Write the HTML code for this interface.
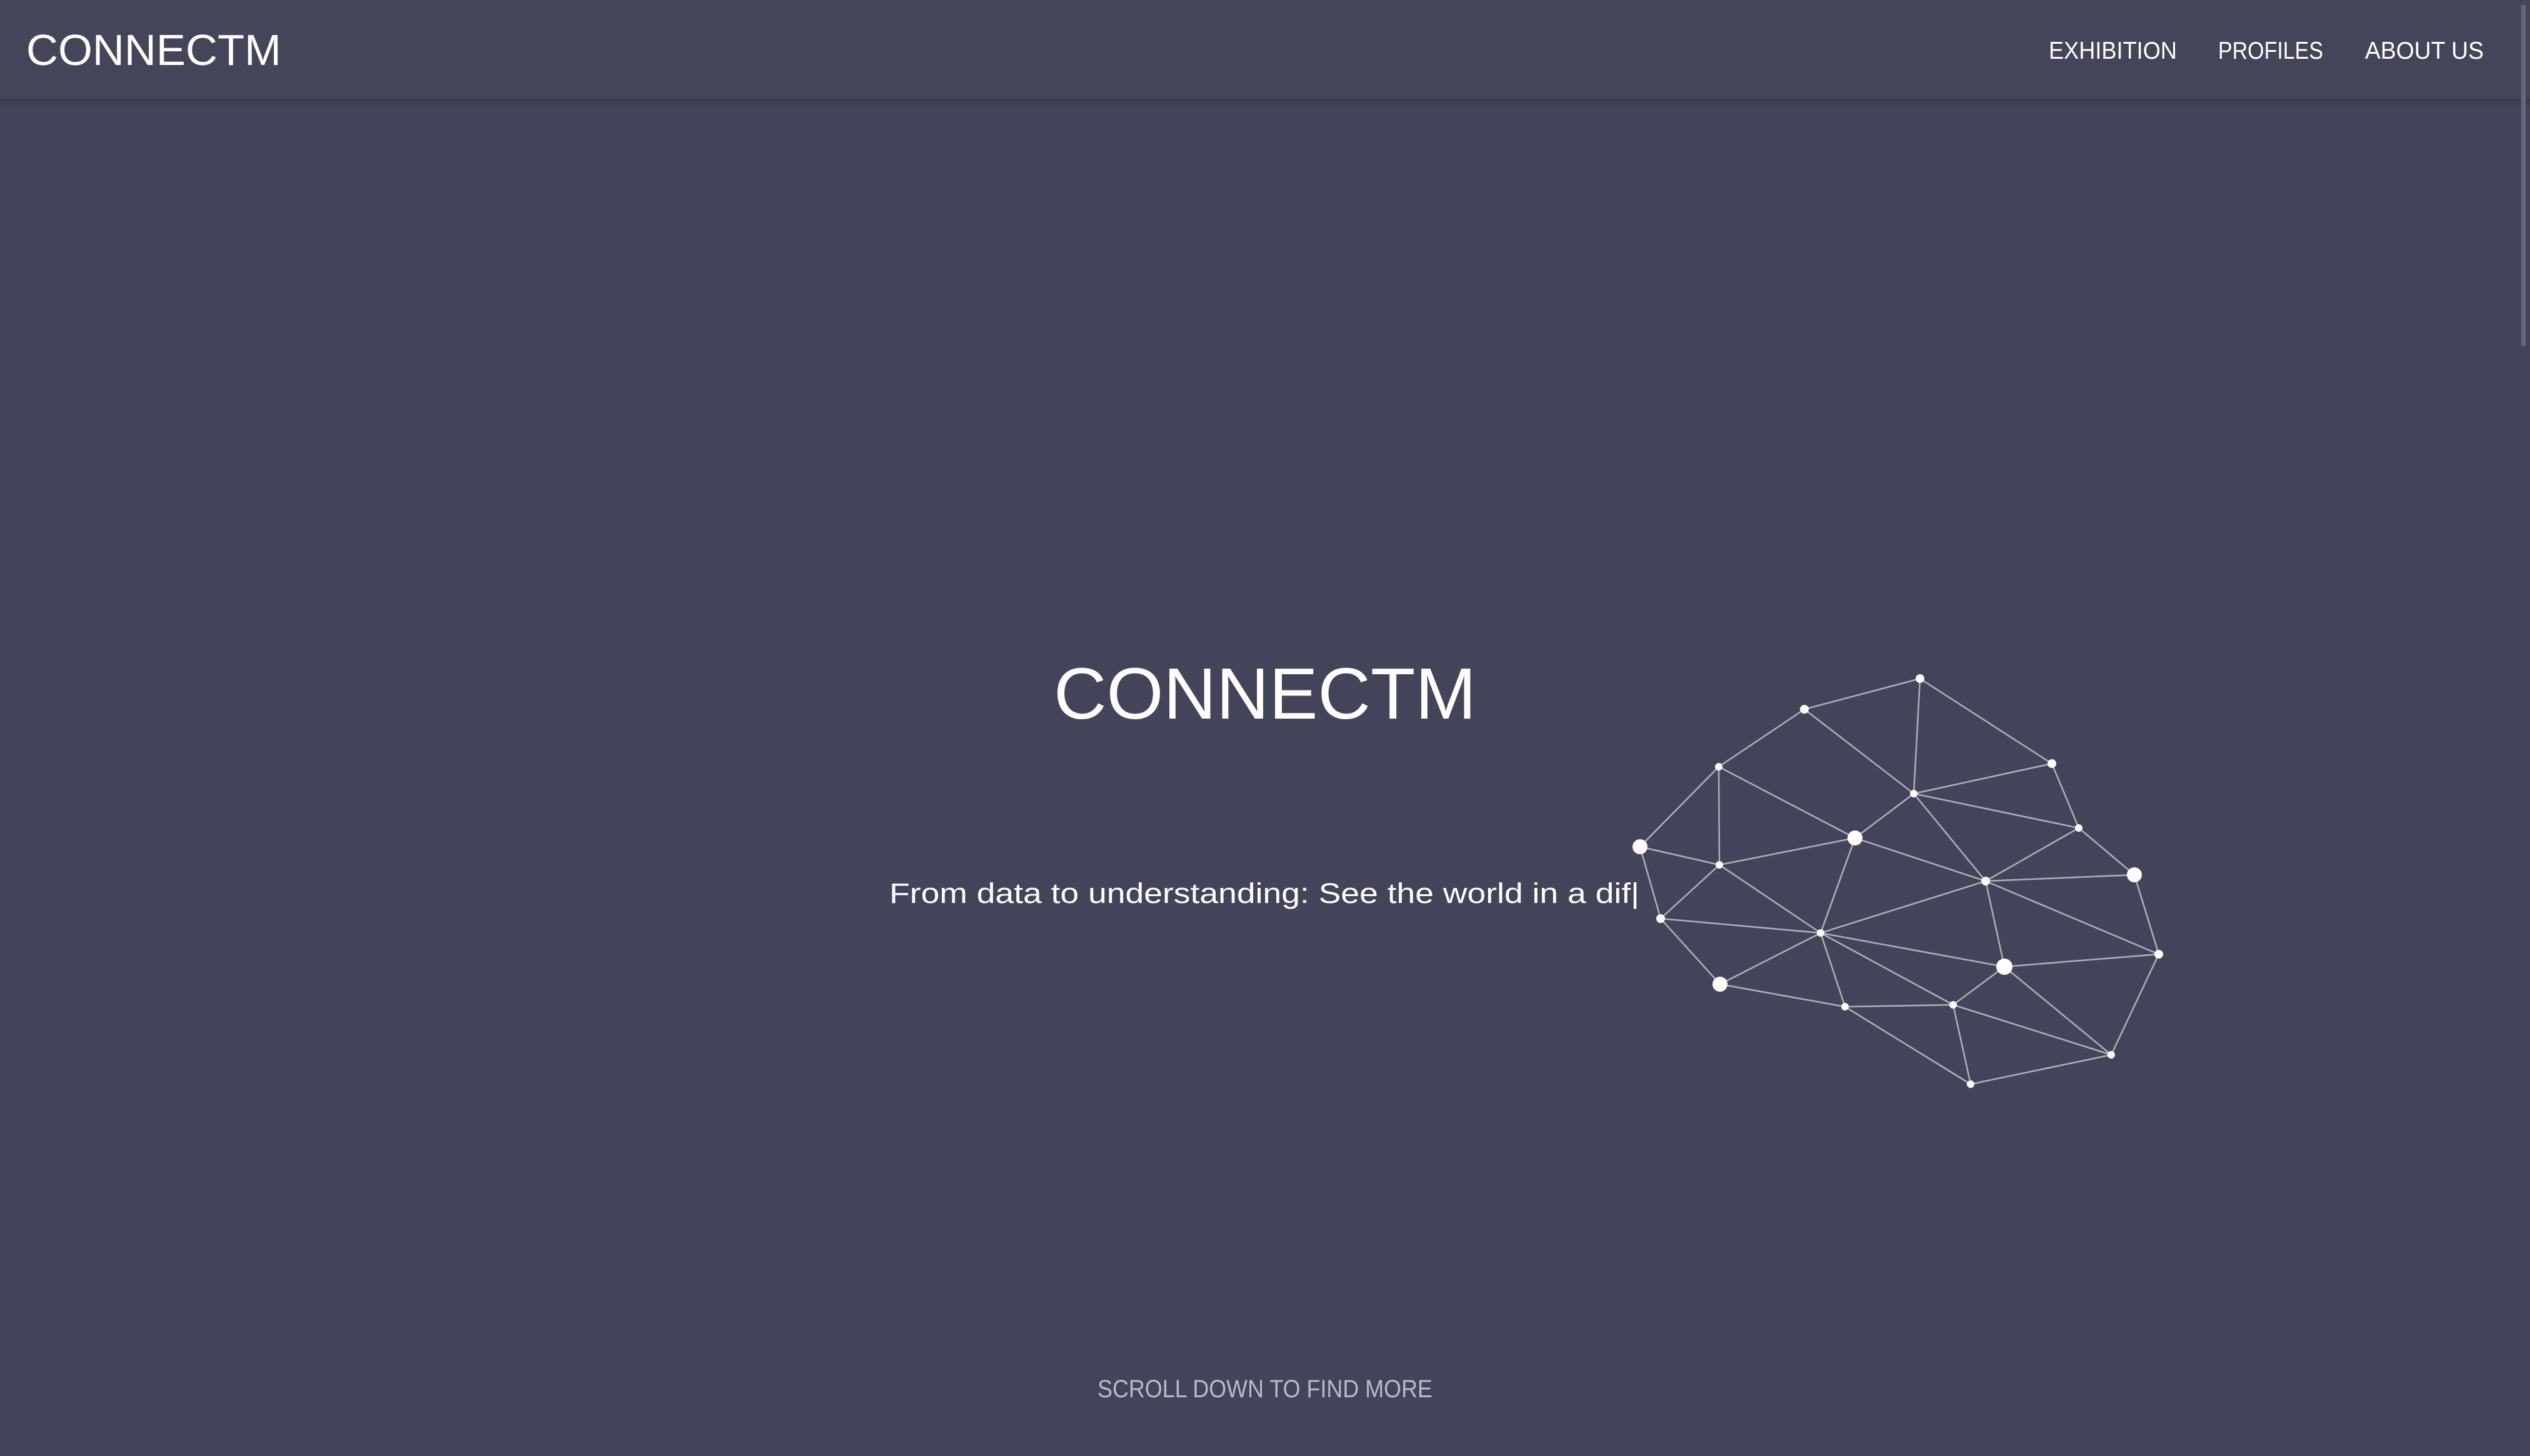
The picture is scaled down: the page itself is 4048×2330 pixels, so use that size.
<!DOCTYPE html>
<html><head><meta charset="utf-8">
<style>
html,body{margin:0;padding:0;background:#434459;width:4048px;height:2330px;overflow:hidden}
svg{display:block}
text{font-family:"Liberation Sans",sans-serif}
</style></head>
<body>
<svg width="4048" height="2330" viewBox="0 0 4048 2330" xmlns="http://www.w3.org/2000/svg">
<defs>
<linearGradient id="sh" x1="0" y1="0" x2="0" y2="1">
<stop offset="0" stop-color="#2e2f40" stop-opacity="0.5"/>
<stop offset="1" stop-color="#434459" stop-opacity="0"/>
</linearGradient>
</defs>
<rect width="4048" height="2330" fill="#434459"/>
<rect x="0" y="0" width="4048" height="158" fill="#444559"/>
<rect x="0" y="158" width="4048" height="22" fill="url(#sh)"/>
<text x="42" y="104" font-size="70" fill="#fff" textLength="408" lengthAdjust="spacingAndGlyphs">CONNECTM</text>
<text x="3278" y="94" font-size="39" fill="#fff" textLength="205" lengthAdjust="spacingAndGlyphs">EXHIBITION</text>
<text x="3549" y="94" font-size="39" fill="#fff" textLength="168" lengthAdjust="spacingAndGlyphs">PROFILES</text>
<text x="3784" y="94" font-size="39" fill="#fff" textLength="190" lengthAdjust="spacingAndGlyphs">ABOUT US</text>
<rect x="4034" y="8" width="7" height="546" fill="#66677a"/>

<text x="1686" y="1150" font-size="116" fill="#fff" textLength="676" lengthAdjust="spacingAndGlyphs">CONNECTM</text>
<text x="1423" y="1445" font-size="45" fill="#fff" textLength="1200" lengthAdjust="spacingAndGlyphs">From data to understanding: See the world in a dif|</text>
<text x="1756" y="2236" font-size="40" fill="#b9b9c9" textLength="536" lengthAdjust="spacingAndGlyphs">SCROLL DOWN TO FIND MORE</text>

<g stroke="#aeaebb" stroke-width="2.5" fill="none">
<path d="M3072 1086L2887 1135M3072 1086L3062 1270M3072 1086L3283 1222M2887 1135L2750 1227M2887 1135L3062 1270M2750 1227L2624 1355M2750 1227L2751 1384M2750 1227L2968 1341M3283 1222L3062 1270M3283 1222L3326 1325M3062 1270L2968 1341M3062 1270L3326 1325M3062 1270L3177 1410M2624 1355L2751 1384M2624 1355L2657 1470M2968 1341L2751 1384M2968 1341L3177 1410M2968 1341L2913 1493M3326 1325L3177 1410M3326 1325L3415 1400M3177 1410L3415 1400M3177 1410L3454 1527M3177 1410L2913 1493M3177 1410L3207 1547M3415 1400L3454 1527M2751 1384L2657 1470M2751 1384L2913 1493M2657 1470L2913 1493M2657 1470L2752 1575M2913 1493L2752 1575M2913 1493L3207 1547M2913 1493L3125 1608M2913 1493L2952 1611M2752 1575L2952 1611M2952 1611L3125 1608M2952 1611L3153 1735M3125 1608L3207 1547M3125 1608L3153 1735M3125 1608L3378 1688M3207 1547L3454 1527M3207 1547L3378 1688M3454 1527L3378 1688M3378 1688L3153 1735"/>
</g>
<g fill="#fff">
<circle cx="3072" cy="1086" r="7"/><circle cx="2887" cy="1135" r="7"/><circle cx="2750" cy="1227" r="6"/>
<circle cx="3283" cy="1222" r="7"/><circle cx="3062" cy="1270" r="6"/><circle cx="2624" cy="1355" r="12"/>
<circle cx="2968" cy="1341" r="12"/><circle cx="3326" cy="1325" r="6"/><circle cx="2751" cy="1384" r="6"/>
<circle cx="3177" cy="1410" r="7"/><circle cx="3415" cy="1400" r="12"/><circle cx="2657" cy="1470" r="7"/>
<circle cx="2913" cy="1493" r="6"/><circle cx="3454" cy="1527" r="7"/><circle cx="3207" cy="1547" r="13"/>
<circle cx="2752" cy="1575" r="12"/><circle cx="2952" cy="1611" r="6"/><circle cx="3125" cy="1608" r="6"/>
<circle cx="3378" cy="1688" r="6"/><circle cx="3153" cy="1735" r="6"/>
</g>
</svg>
</body></html>
